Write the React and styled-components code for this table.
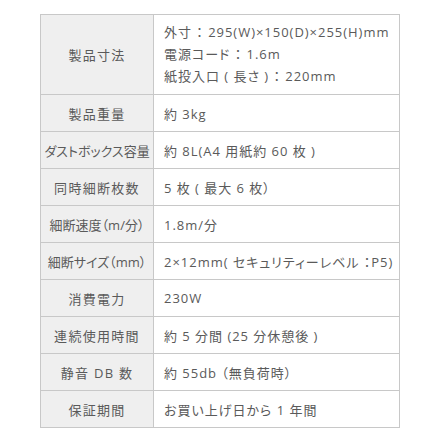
import styled, { createGlobalStyle } from 'styled-components';

const GlobalStyle = createGlobalStyle`
  html, body {
    margin: 0;
    padding: 0;
    background: #fff;
  }
`;

const Page = styled.div`
  padding: 14px 40px;
`;

const SpecTable = styled.table`
  width: 360px;
  border-collapse: collapse;
  table-layout: fixed;
  font-family: "Open Sans", "Noto Sans CJK JP", sans-serif;
  font-feature-settings: "palt";
  font-size: 13px;
  color: #5a5a5a;
  border: 1px solid #c8c8c8;
`;

const Label = styled.th`
  width: 112px;
  height: 36px;
  padding: 0;
  background: #efefef;
  font-weight: 400;
  text-align: center;
  letter-spacing: ${(p) => (p.$tight ? '0' : '0.1em')};
  border: 1px solid #c8c8c8;
  white-space: nowrap;
`;

const Value = styled.td`
  padding: ${(p) => (p.$multi ? '6px 10px 7px' : '0 10px')};
  height: 36px;
  line-height: ${(p) => (p.$multi ? '22px' : 'normal')};
  letter-spacing: 0.075em;
  border: 1px solid #c8c8c8;
  white-space: nowrap;
`;

const specs = [
  {
    label: '製品寸法',
    lines: ['外寸 ： 295(W)×150(D)×255(H)mm', '電源コード ： 1.6m', '紙投入口 ( 長さ ) ： 220mm'],
  },
  { label: '製品重量', lines: ['約 3kg'] },
  { label: 'ダストボックス容量', lines: ['約 8L(A4 用紙約 60 枚 )'], tight: true },
  { label: '同時細断枚数', lines: ['5 枚 ( 最大 6 枚）'] },
  { label: '細断速度（m/分）', lines: ['1.8m/分'], tight: true },
  { label: '細断サイズ（mm）', lines: ['2×12mm( セキュリティーレベル ：P5)'], tight: true },
  { label: '消費電力', lines: ['230W'] },
  { label: '連続使用時間', lines: ['約 5 分間 (25 分休憩後 )'] },
  { label: '静音 DB 数', lines: ['約 55db （無負荷時）'] },
  { label: '保証期間', lines: ['お買い上げ日から 1 年間'] },
];

const App = () => (
  <>
    <GlobalStyle />
    <Page>
      <SpecTable>
        <tbody>
          {specs.map((s) => (
            <tr key={s.label}>
              <Label $tight={s.tight}>{s.label}</Label>
              <Value $multi={s.lines.length > 1}>
                {s.lines.map((l) => (
                  <div key={l}>{l}</div>
                ))}
              </Value>
            </tr>
          ))}
        </tbody>
      </SpecTable>
    </Page>
  </>
);

export default App;
